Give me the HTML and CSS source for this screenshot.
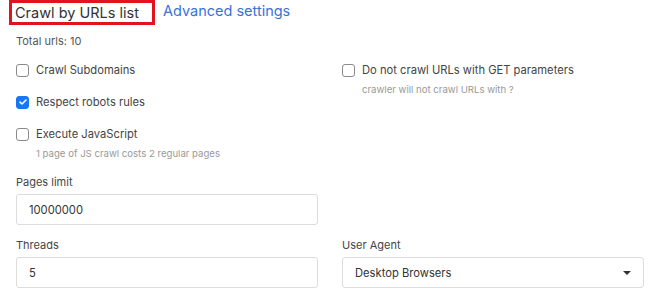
FILE: index.html
```html
<!DOCTYPE html>
<html>
<head>
<meta charset="utf-8">
<link rel="stylesheet" href="styles.css">
</head>
<body>
<div class="page">
  <div class="tabs">
    <div class="tab active">Crawl by URLs list</div>
    <div class="tab link">Advanced settings</div>
  </div>
  <div class="total">Total urls: 10</div>
  <div class="grid">
    <div class="col">
      <label class="check"><span class="box"></span><span class="lbl">Crawl Subdomains</span></label>
      <label class="check"><span class="box on"><svg width="8" height="6" viewBox="0 0 8 6"><path d="M1 3.2 L3 5 L7 1" fill="none" stroke="#fff" stroke-width="1.6" stroke-linecap="round" stroke-linejoin="round"/></svg></span><span class="lbl">Respect robots rules</span></label>
      <div class="check-wrap">
        <label class="check"><span class="box"></span><span class="lbl">Execute JavaScript</span></label>
        <div class="hint">1 page of JS crawl costs 2 regular pages</div>
      </div>
    </div>
    <div class="col">
      <div class="check-wrap">
        <label class="check"><span class="box"></span><span class="lbl">Do not crawl URLs with GET parameters</span></label>
        <div class="hint">crawler will not crawl URLs with ?</div>
      </div>
    </div>
  </div>
  <div class="fields">
    <div class="field">
      <div class="flabel">Pages limit</div>
      <div class="input">10000000</div>
    </div>
    <div class="field"></div>
    <div class="field">
      <div class="flabel">Threads</div>
      <div class="input">5</div>
    </div>
    <div class="field">
      <div class="flabel">User Agent</div>
      <div class="input select"><span>Desktop Browsers</span><span class="caret"></span></div>
    </div>
  </div>
</div>
</body>
</html>
```

FILE: styles.css
```css
* { box-sizing: border-box; }
html, body { margin: 0; padding: 0; background: #fff; }
body { font-family: Inter, "Noto Sans", sans-serif; color: #333; }
.page { padding: 0 9px 0 16px; }
.tabs { display: flex; align-items: center; gap: 8px; margin-left: -7px; margin-top: -1px; height: 26px; }
.tab { font-size: 14.5px; line-height: 19px; }
.tab.active { border: 3px solid #e0141e; padding: 0 13px 0 3px; color: #333; height: 25px; }
.tab.link { color: #3a72d8; margin-top: -4px; }
.total { font-size: 11px; color: #555; margin-top: 9px; line-height: 14px; }
.grid { display: grid; grid-template-columns: 326px 1fr; margin-top: 12px; }
.col { display: flex; flex-direction: column; gap: 12px; }
.check { display: flex; align-items: center; gap: 7px; font-size: 11.2px; line-height: 20px; color: #444; }
.box { width: 13px; height: 13px; border: 1px solid #8a8a8a; border-radius: 3px; display: inline-flex; align-items: center; justify-content: center; flex: none; }
.box.on { background: #1877f2; border-color: #1877f2; }
.check-wrap { display: flex; flex-direction: column; }
.hint { font-size: 9.6px; color: #999; margin-left: 20px; margin-top: 3px; line-height: 14px; }
.fields { display: grid; grid-template-columns: 302px 302px; column-gap: 24px; row-gap: 12px; margin-top: 13px; }
.flabel { font-size: 11px; color: #444; line-height: 16px; margin-bottom: 4px; }
.input { height: 31px; border: 1px solid #dcdcdc; border-radius: 3px; padding: 0 12px; display: flex; align-items: center; font-size: 11.2px; color: #333; }
.select { justify-content: space-between; padding-right: 12px; }
.caret { width: 0; height: 0; border-left: 4px solid transparent; border-right: 4px solid transparent; border-top: 4px solid #333; }
```
